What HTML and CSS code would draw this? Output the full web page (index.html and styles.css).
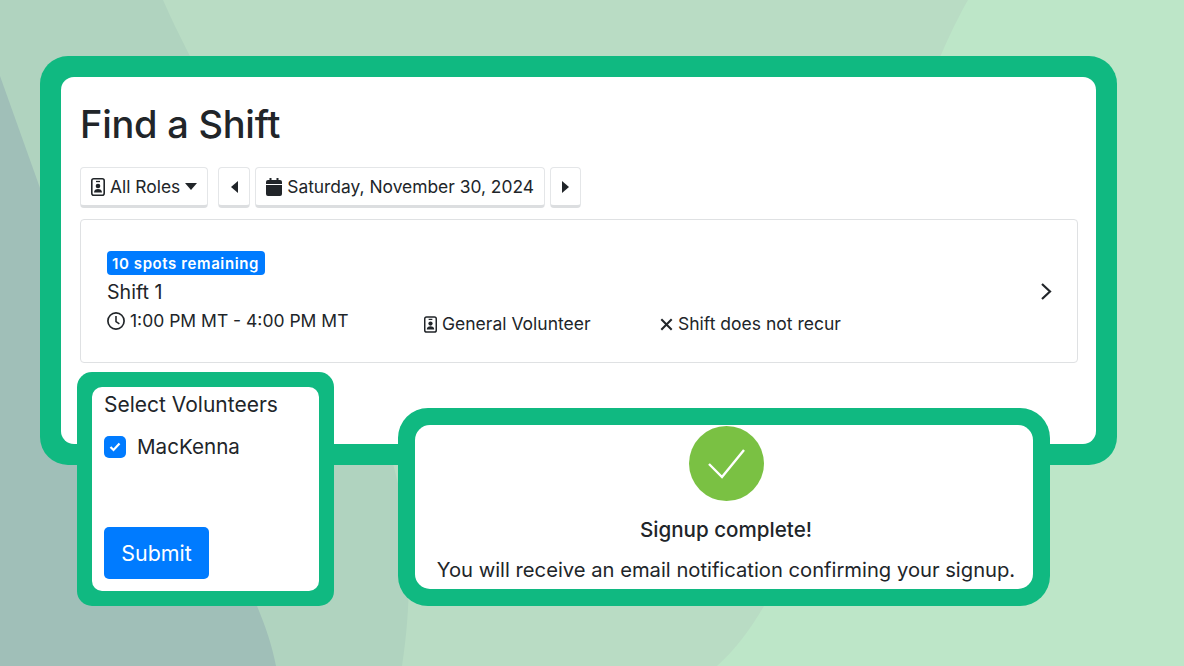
FILE: index.html
```html
<!DOCTYPE html>
<html lang="en">
<head>
    <meta charset="UTF-8">
    <meta name="viewport" content="width=device-width, initial-scale=1.0">
    <title>Find a Shift</title>
    <link rel="stylesheet" href="styles.css">
</head>
<body>
    <svg class="bg-shapes" viewBox="0 0 1184 666" aria-hidden="true">
        <path class="shape-mid" d="M0 0H968C945 40 905 130 860 300C825 430 800 540 764 606C750 630 735 650 717 666H0Z"/>
        <path class="shape-soft" d="M0 0H163C200 85 300 250 370 400C405 480 418 560 402 666H0Z"/>
        <path class="shape-dark" d="M0 76L40 188C90 320 180 450 257 606C265 625 272 645 276 666H0Z"/>
    </svg>

    <div class="stage">
        <section class="main-frame">
            <div class="main-body">
                <h1>Find a Shift</h1>
                <div class="toolbar">
                    <button class="tool-btn roles-btn">
                        <svg class="ico-id" viewBox="0 0 14 18"><rect x="0.8" y="0.8" width="12.4" height="16.4" rx="2" fill="none" stroke="currentColor" stroke-width="1.6"/><path d="M5 3.500h4" stroke="currentColor" stroke-width="1.300"/><circle cx="7" cy="8" r="2.300" fill="currentColor"/><path d="M3 14.500c0-2.600 1.800-3.600 4-3.600s4 1 4 3.600z" fill="currentColor"/></svg>
                        All Roles
                        <svg class="caret" viewBox="0 0 12 7"><path d="M0 0h12L6 7z" fill="currentColor"/></svg>
                    </button>
                    <button class="tool-btn arrow-btn prev-btn">
                        <svg class="tri" viewBox="0 0 7 12"><path d="M7 0v12L0 6z" fill="currentColor"/></svg>
                    </button>
                    <button class="tool-btn date-btn">
                        <svg class="ico-cal" viewBox="0 0 16 18"><path d="M3.500 0h2v2h5V0h2v2H14a2 2 0 0 1 2 2v2H0V4a2 2 0 0 1 2-2h1.500zM0 7h16v9a2 2 0 0 1-2 2H2a2 2 0 0 1-2-2z" fill="currentColor"/></svg>
                        Saturday, November 30, 2024
                    </button>
                    <button class="tool-btn arrow-btn">
                        <svg class="tri" viewBox="0 0 7 12"><path d="M0 0v12L7 6z" fill="currentColor"/></svg>
                    </button>
                </div>

                <div class="shift-card">
                    <div class="shift-info">
                        <span class="badge">10 spots remaining</span>
                        <div class="shift-name">Shift 1</div>
                        <div class="shift-meta">
                            <div class="meta-item meta-time">
                                <svg class="ico-clock" viewBox="0 0 16 16"><circle cx="8" cy="8" r="7.200" fill="none" stroke="currentColor" stroke-width="1.500"/><path d="M8 3.500V8.500L11 10.500" fill="none" stroke="currentColor" stroke-width="1.400"/></svg>
                                1:00 PM MT - 4:00 PM MT
                            </div>
                            <div class="meta-item meta-role">
                                <svg class="ico-id small" viewBox="0 0 14 18"><rect x="0.8" y="0.8" width="12.4" height="16.4" rx="2" fill="none" stroke="currentColor" stroke-width="1.6"/><path d="M5 3.500h4" stroke="currentColor" stroke-width="1.300"/><circle cx="7" cy="8" r="2.300" fill="currentColor"/><path d="M3 14.500c0-2.600 1.800-3.600 4-3.600s4 1 4 3.600z" fill="currentColor"/></svg>
                                General Volunteer
                            </div>
                            <div class="meta-item meta-recur">
                                <svg class="ico-x" viewBox="0 0 12 12"><path d="M1.200 1.200l9.600 9.600M10.800 1.200l-9.600 9.600" stroke="currentColor" stroke-width="1.900" fill="none"/></svg>
                                Shift does not recur
                            </div>
                        </div>
                    </div>
                    <svg class="chevron" viewBox="0 0 12 19"><path d="M2 2l8 7.500-8 7.500" fill="none" stroke="currentColor" stroke-width="2.200"/></svg>
                </div>
            </div>
        </section>

        <!-- these two sit over the bottom edge of the main frame -->
        <section class="volunteers">
            <div class="vol-body">
                <div class="vol-title">Select Volunteers</div>
                <label class="vol-row">
                    <span class="check">
                        <svg viewBox="0 0 12 10"><path d="M1.500 5l3 3 6-6.500" fill="none" stroke="#fff" stroke-width="2.200"/></svg>
                    </span>
                    MacKenna
                </label>
                <button class="submit">Submit</button>
            </div>
        </section>

        <section class="signup">
            <div class="signup-body">
                <svg class="done" viewBox="0 0 75 75">
                    <circle cx="37.500" cy="37.500" r="37.500" fill="#7ac143"/>
                    <path d="M20 38l13 13 22-27" fill="none" stroke="#fff" stroke-width="2.400"/>
                </svg>
                <div class="signup-title">Signup complete!</div>
                <div class="signup-text">You will receive an email notification confirming your signup.</div>
            </div>
        </section>
    </div>
</body>
</html>
```

FILE: styles.css
```css
html, body{
    margin: 0;
    padding: 0;
    height: 100%;
    overflow: hidden;
}
body{
    background-color: #bde6c8;
    font-family: Inter, "Liberation Sans", sans-serif;
    color: #212529;
}
.bg-shapes{
    position: absolute;
    top: 0;
    left: 0;
    width: 1184px;
    height: 666px;
}
.shape-mid{
    fill: #b9dcc4;
}
.shape-soft{
    fill: #b0d3bf;
}
.shape-dark{
    fill: #a0bfb8;
}
.stage{
    position: relative;
    width: 1184px;
    height: 666px;
    padding: 56px 0 0 40px;
    box-sizing: border-box;
}
.main-frame{
    width: 1077px;
    height: 409px;
    box-sizing: border-box;
    background-color: #10b981;
    border-radius: 28px;
    padding: 21px;
}
.main-body{
    height: 100%;
    box-sizing: border-box;
    background-color: white;
    border-radius: 13px;
    padding: 24px 18px 0 19px;
}
h1{
    margin: 0;
    font-size: 38px;
    line-height: 46px;
    font-weight: 500;
    letter-spacing: -0.25px;
}
.toolbar{
    display: flex;
    margin-top: 20px;
    gap: 5px;
}
.tool-btn{
    height: 41px;
    display: flex;
    align-items: center;
    gap: 5px;
    padding: 0 10px;
    background-color: white;
    border: 1px solid #e4e6e8;
    border-bottom: 3px solid #dcdee0;
    border-radius: 4px;
    font-family: inherit;
    font-size: 17.4px;
    color: #212529;
}
.arrow-btn{
    width: 31px;
    justify-content: center;
    padding: 0;
}
.prev-btn{
    width: 32px;
    margin-left: 5px;
}
.ico-id{
    width: 14px;
    height: 18px;
    flex-shrink: 0;
}
.ico-id.small{
    width: 13px;
    height: 17px;
}
.ico-cal{
    width: 16px;
    height: 18px;
    flex-shrink: 0;
}
.ico-clock{
    width: 18px;
    height: 18px;
    flex-shrink: 0;
}
.ico-x{
    width: 13px;
    height: 13px;
    flex-shrink: 0;
}
.caret{
    width: 12px;
    height: 7px;
}
.tri{
    width: 7px;
    height: 12px;
}
.shift-card{
    margin-top: 11px;
    height: 144px;
    box-sizing: border-box;
    border: 1px solid #dfe1e3;
    border-radius: 4px;
    padding: 31px 25px 0 26px;
    display: flex;
    justify-content: space-between;
    align-items: flex-start;
}
.shift-info{
    flex: 1;
}
.badge{
    display: inline-block;
    height: 24px;
    line-height: 25px;
    padding: 0 6px 0 5px;
    border-radius: 4px;
    background-color: #007bff;
    color: white;
    font-size: 15px;
    font-weight: 600;
    letter-spacing: 0.6px;
}
.shift-name{
    font-size: 19.6px;
    line-height: 26px;
    margin-top: 4px;
}
.shift-meta{
    display: flex;
    align-items: flex-start;
    font-size: 17.5px;
    margin-top: 4px;
}
.meta-item{
    display: flex;
    align-items: center;
    gap: 5px;
    line-height: 24px;
}
.meta-time{
    width: 317px;
}
.meta-role{
    width: 236px;
    margin-top: 3px;
}
.meta-recur{
    margin-top: 3px;
}
.chevron{
    width: 12px;
    height: 19px;
    margin-top: 31px;
}
.volunteers{
    position: absolute;
    left: 77px;
    top: 372px;
    width: 257px;
    height: 234px;
    box-sizing: border-box;
    background-color: #10b981;
    border-radius: 15px;
    padding: 15px;
}
.vol-body{
    height: 100%;
    box-sizing: border-box;
    background-color: white;
    border-radius: 10px;
    padding: 6px 12px 0 12px;
}
.vol-title{
    font-size: 21px;
    line-height: 24px;
}
.vol-row{
    display: flex;
    align-items: center;
    gap: 11px;
    font-size: 20.6px;
    line-height: 24px;
    margin-top: 18px;
}
.check{
    width: 22px;
    height: 22px;
    border-radius: 5px;
    background-color: #007bff;
    display: flex;
    align-items: center;
    justify-content: center;
}
.check svg{
    width: 12px;
    height: 10px;
}
.submit{
    display: block;
    margin-top: 68px;
    width: 105px;
    height: 52px;
    border: none;
    border-radius: 5px;
    background-color: #007bff;
    color: white;
    font-family: inherit;
    font-size: 21.4px;
}
.signup{
    position: absolute;
    left: 398px;
    top: 408px;
    width: 652px;
    height: 198px;
    box-sizing: border-box;
    background-color: #10b981;
    border-radius: 30px;
    padding: 17px;
}
.signup-body{
    height: 100%;
    box-sizing: border-box;
    background-color: white;
    border-radius: 15px;
    text-align: center;
    padding: 1px 0 0 4px;
}
.done{
    display: block;
    width: 75px;
    height: 75px;
    margin: 0 auto;
}
.signup-title{
    font-size: 20.6px;
    font-weight: 500;
    line-height: 24px;
    margin-top: 17px;
}
.signup-text{
    font-size: 20.2px;
    line-height: 24px;
    margin-top: 16px;
    white-space: nowrap;
}
```
